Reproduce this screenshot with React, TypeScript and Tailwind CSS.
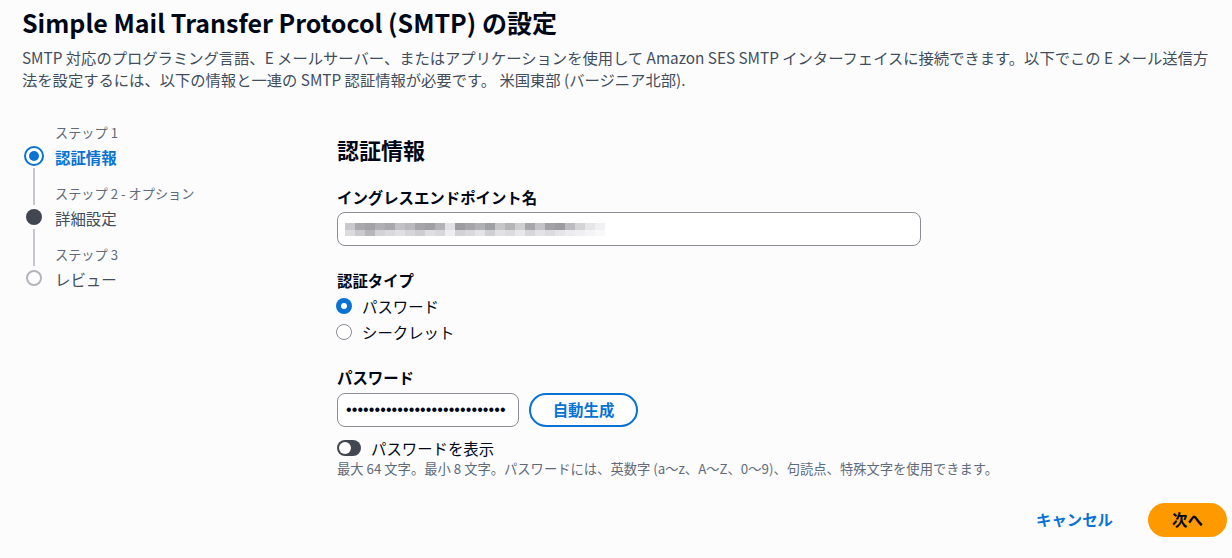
import React from "react";

const FONT = '"Noto Sans CJK JP", "Noto Sans", sans-serif';

const mosaicTop = [
  "#c9c9cc", "#a9a9ad", "#a3a3a7", "#b0b0b4", "#a8a8ac", "#c2c2c5", "#b9b9bd", "#a5a5a9", "#a0a0a4", "#b3b3b7",
  "#e2e2e4", "#9d9da1", "#a6a6aa", "#b1b1b5", "#9fa0a4", "#c6c6c9", "#b5b5b8", "#cfcfd1", "#a7a7ab", "#c4c4c7",
  "#a2a2a6", "#9c9ca0", "#bcbcbf", "#d4d4d6", "#e6e6e8", "#f0f0f2",
];
const mosaicBottom = [
  "#dcdcde", "#cbcbce", "#b7b7ba", "#d3d3d5", "#dadadc", "#e0e0e2", "#d6d6d8", "#cdcdd0", "#dedee0", "#d8d8da",
  "#eeeef0", "#d2d2d4", "#d9d9db", "#e4e4e6", "#d0d0d3", "#e1e1e3", "#dcdcde", "#e8e8ea", "#d7d7d9", "#e3e3e5",
  "#dcdcdf", "#e5e5e7", "#ececee", "#f0f0f2", "#f4f4f6", "#f8f8f9",
];

function Step({
  label,
  name,
  state,
  first,
  last,
}: {
  label: string;
  name: string;
  state: "active" | "done" | "todo";
  first?: boolean;
  last?: boolean;
}) {
  return (
    <div className="flex">
      <div className="flex w-[24px] flex-col items-center">
        <div className={`h-[20px] w-[2px] ${first ? "" : "bg-[#c6c6cd]"}`} />
        <div className="flex h-[24px] items-center justify-center">
          {state === "active" && (
            <div className="flex h-[20px] w-[20px] items-center justify-center rounded-full border-2 border-[#0972d3] bg-white">
              <div className="h-[10px] w-[10px] rounded-full bg-[#0972d3]" />
            </div>
          )}
          {state === "done" && <div className="h-[16px] w-[16px] rounded-full bg-[#424650]" />}
          {state === "todo" && (
            <div className="h-[16px] w-[16px] rounded-full border-2 border-[#b4b4bb] bg-white" />
          )}
        </div>
        <div className={`w-[2px] flex-1 ${last ? "" : "bg-[#c6c6cd]"}`} />
      </div>
      <div className={`pl-[9px] ${last ? "" : "pb-[17px]"}`}>
        <div className="h-[18px] text-[13.2px] leading-[18px] text-[#5f6b7a]">{label}</div>
        <div
          className={`mt-[4px] h-[22px] text-[15.4px] leading-[22px] ${
            state === "active" ? "font-bold text-[#0972d3]" : "text-[#414d5c]"
          }`}
        >
          {name}
        </div>
      </div>
    </div>
  );
}

export default function App() {
  return (
    <div className="min-h-[558px] bg-[#fcfcfd] text-[#000716]" style={{ fontFamily: FONT }}>
      <div className="pl-[22px] pr-[18px] pt-[6px]">
        <h1 className="text-[25px] font-bold leading-[32px] text-[#000716]">
          Simple Mail Transfer Protocol (SMTP) の設定
        </h1>
        <p className="mt-[8px] text-[15.3px] leading-[22px] text-[#414d5c]">
          SMTP 対応のプログラミング言語、E メールサーバー、またはアプリケーションを使用して Amazon SES SMTP
          インターフェイスに接続できます。以下でこの E メール送信方法を設定するには、以下の情報と一連の SMTP
          認証情報が必要です。 米国東部 (バージニア北部).
        </p>
      </div>

      <div className="mt-[34px] flex pl-[22px]">
        <div className="w-[315px] shrink-0">
          <Step label="ステップ 1" name="認証情報" state="active" first />
          <Step label="ステップ 2 - オプション" name="詳細設定" state="done" />
          <Step label="ステップ 3" name="レビュー" state="todo" last />
        </div>

        <div className="flex-1 pt-[10px]">
          <h2 className="text-[22px] font-bold leading-[30px] text-[#000716]">認証情報</h2>

          <div className="mt-[22px] text-[15.4px] font-bold leading-[22px]">イングレスエンドポイント名</div>
          <div className="mt-[4px] flex h-[34px] w-[584px] items-center rounded-[8px] border border-[#8c8c94] bg-white pl-[7px]">
            <div className="flex flex-col">
              <div className="flex">
                {mosaicTop.map((c, i) => (
                  <div key={i} className="h-[7px] w-[10px]" style={{ backgroundColor: c }} />
                ))}
              </div>
              <div className="flex">
                {mosaicBottom.map((c, i) => (
                  <div key={i} className="h-[6px] w-[10px]" style={{ backgroundColor: c }} />
                ))}
              </div>
            </div>
          </div>

          <div className="mt-[23px] text-[15.4px] font-bold leading-[22px]">認証タイプ</div>
          <div className="mt-[2px] flex h-[26px] items-center gap-[10px]">
            <div className="ml-[-1px] flex h-[16px] w-[16px] items-center justify-center rounded-full bg-[#0972d3]">
              <div className="h-[6px] w-[6px] rounded-full bg-white" />
            </div>
            <span className="text-[15.4px] leading-[22px]">パスワード</span>
          </div>
          <div className="flex h-[26px] items-center gap-[10px]">
            <div className="ml-[-1px] h-[16px] w-[16px] rounded-full border border-[#8c8c94] bg-white" />
            <span className="text-[15.4px] leading-[22px]">シークレット</span>
          </div>

          <div className="mt-[21px] text-[15.4px] font-bold leading-[22px]">パスワード</div>
          <div className="mt-[5px] flex items-center gap-[10px]">
            <div className="flex h-[34px] w-[182px] items-center rounded-[8px] border border-[#8c8c94] bg-white pl-[8px]">
              <span
                className="text-[16px] leading-none tracking-[0.1px] text-[#000716]"
                style={{ fontFamily: '"Liberation Sans", sans-serif' }}
              >
                ••••••••••••••••••••••••••••
              </span>
            </div>
            <button className="flex h-[34px] w-[109px] items-center justify-center rounded-full border-2 border-[#0972d3] bg-white text-[15.4px] font-bold text-[#0972d3]">
              自動生成
            </button>
          </div>

          <div className="mt-[10px] flex h-[22px] items-center gap-[10px]">
            <div className="flex h-[16px] w-[24px] items-center rounded-full bg-[#424650] px-[2px]">
              <div className="h-[12px] w-[12px] rounded-full bg-white" />
            </div>
            <span className="text-[15.4px] leading-[22px] text-[#000716]">パスワードを表示</span>
          </div>
          <div className="mt-[1px] whitespace-nowrap text-[13.3px] leading-[18px] text-[#5f6b7a]">
            最大 64 文字。最小 8 文字。パスワードには、英数字 (a〜z、A〜Z、0〜9)、句読点、特殊文字を使用できます。
          </div>
        </div>
      </div>

      <div className="mt-[25px] flex items-center justify-end gap-[15px] pr-[5px]">
        <button className="h-[34px] px-[20px] text-[15.4px] font-bold text-[#0972d3]">キャンセル</button>
        <button className="h-[34px] w-[79px] rounded-full bg-[#ff9900] text-[15.4px] font-bold text-[#000716]">
          次へ
        </button>
      </div>
    </div>
  );
}
